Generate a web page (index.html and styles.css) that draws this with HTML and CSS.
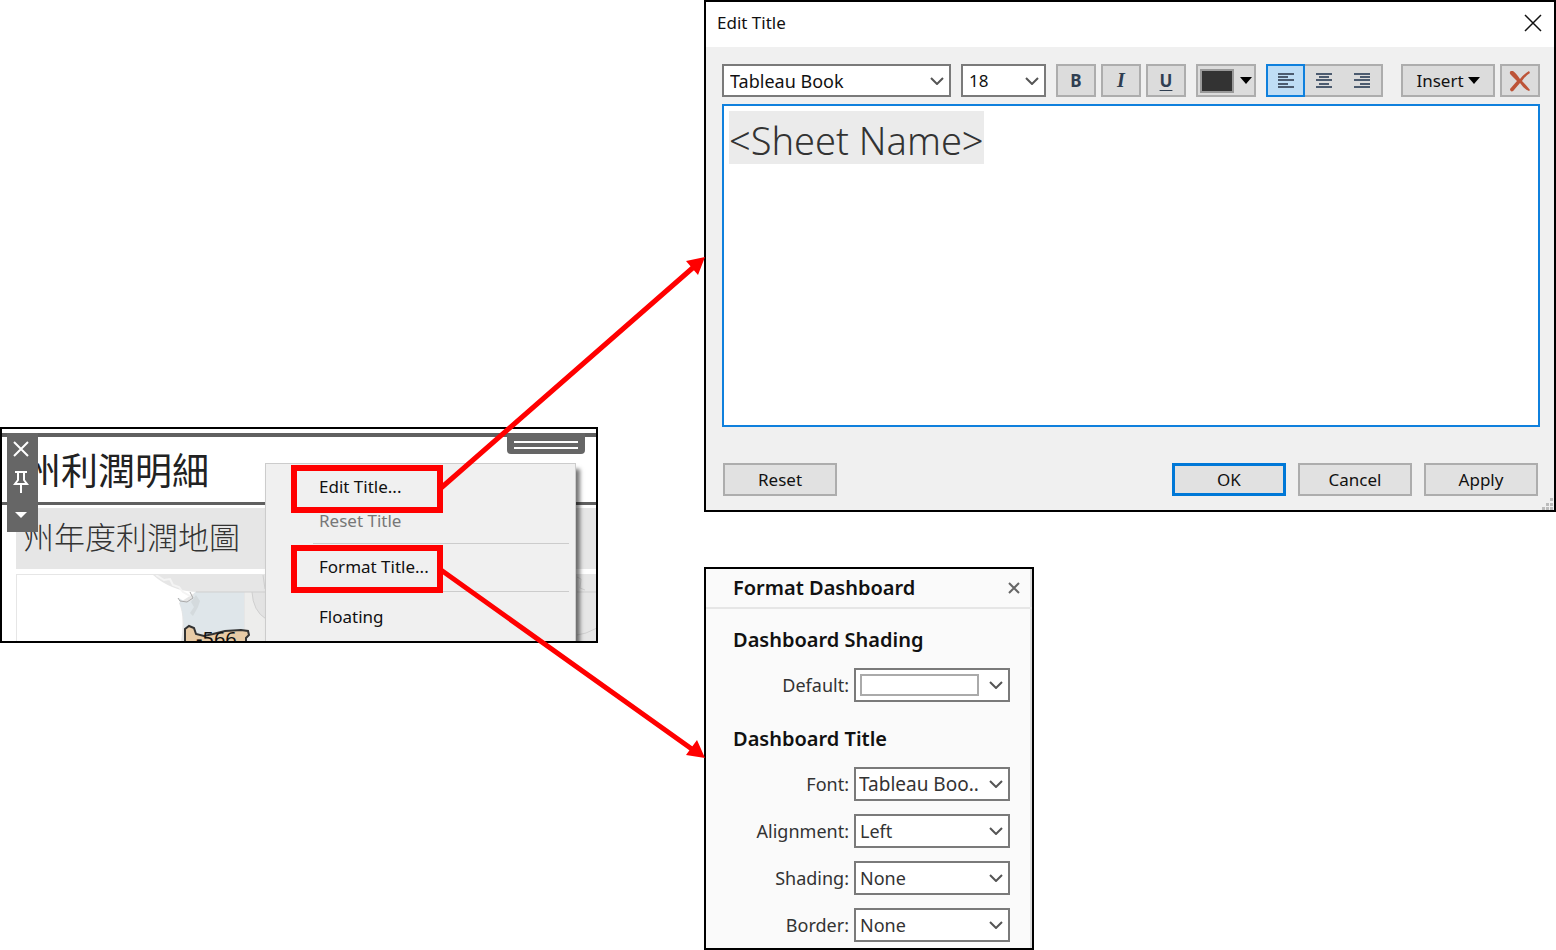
FILE: index.html
```html
<!DOCTYPE html>
<html lang="zh-Hant">
<head>
<meta charset="utf-8">
<title>Edit Title and Format Title</title>
<link rel="stylesheet" href="styles.css">
</head>
<body>
<main class="board">
  <section class="sheet" aria-label="Dashboard">
    <h1 class="sheet-title">州利潤明細</h1>
    <h2 class="sheet-subtitle">州年度利潤地圖</h2>
    <div class="map">
      <svg width="580" height="67" viewBox="16 574 580 67" aria-hidden="true">
        <path d="M152 574H596V641H264L180 641Q184 615 178 602L195 591Q170 590 152 574Z" fill="#e6e6e6"/>
        <path d="M155 574l8 5 6-1 3 6 6 2 4 5 7 4" fill="none" stroke="#f4f4f4" stroke-width="2"/>
        <path d="M178 597l6 4 6-1 4-9H243V641H183Q184 614 179 603Z" fill="#dfe6ea"/>
        <path d="M195 594l4 6-2 6-5 9-3-3 4-6-3-5Z" fill="#d4dadd"/>
        <path d="M244 591h21v50h-21Z" fill="#ededec"/>
        <path d="M251 591q1 19 14 27V591Z" fill="#e3e3e3"/>
        <path d="M195 591H265M251 591q1 19 14 27M262 574l2 14" fill="none" stroke="#cfcfcf"/>
        <path d="M177 597l2 3 7 1 6-4-3-6" fill="none" stroke="#aaa"/>
        <path d="M576 576l4 2-1 9 5 2M576 591h20M576 634l9-2 11-5" fill="none" stroke="#cfcfcf"/>
        <path d="M184 642V628l4-3 5 2 2 6 8 2 9-2 12-3 16-1 7 1 1 4-3 3v6Z" fill="#e8cba6" stroke="#333" stroke-width="2"/>
        <text x="195" y="645" class="map-value">-566</text>
      </svg>
    </div>
    <div class="tools">
      <button class="tool" aria-label="Remove"><svg width="18" height="18" viewBox="0 0 18 18"><path d="M2 2l14 14M16 2L2 16" stroke="#fff" stroke-width="2"/></svg></button>
      <button class="tool" aria-label="Pin"><svg width="16" height="24" viewBox="0 0 16 24"><path d="M2 2h12M5 2v8l-3 4h12l-3-4V2M8 14v9" fill="none" stroke="#fff" stroke-width="2"/></svg></button>
      <button class="tool" aria-label="More options"><svg width="12" height="8" viewBox="0 0 12 8"><path d="M0 1h12L6 7Z" fill="#fff"/></svg></button>
    </div>
    <div class="grip"></div>
    <div class="menu" role="menu">
      <button class="item marked" role="menuitem">Edit Title...</button>
      <button class="item off" role="menuitem" disabled>Reset Title</button>
      <hr class="rule">
      <button class="item marked" role="menuitem">Format Title...</button>
      <hr class="rule">
      <button class="item" role="menuitem">Floating</button>
    </div>
  </section>

  <div class="panels">
    <section class="dialog" aria-labelledby="dialog-title">
      <header class="dialog-head">
        <h2 class="dialog-title" id="dialog-title">Edit Title</h2>
        <button class="close" aria-label="Close"><svg width="18" height="18" viewBox="0 0 18 18"><path d="M1 1l16 16M17 1L1 17" stroke="#111" stroke-width="1.5"/></svg></button>
      </header>
      <div class="dialog-body">
        <div class="toolbar">
          <div class="pick family">
            <select aria-label="Font family"><option>Tableau Book</option></select>
            <svg width="14" height="8" viewBox="0 0 14 8"><path d="M1 1l6 6 6-6"/></svg>
          </div>
          <div class="pick size">
            <select aria-label="Font size"><option>18</option></select>
            <svg width="14" height="8" viewBox="0 0 14 8"><path d="M1 1l6 6 6-6"/></svg>
          </div>
          <div class="styles">
            <button class="key bold">B</button>
            <button class="key italic">I</button>
            <button class="key underline">U</button>
          </div>
          <button class="key color" aria-label="Text color"><span class="swatch"></span><svg width="12" height="7" viewBox="0 0 12 7"><path d="M0 0h12L6 7Z"/></svg></button>
          <div class="aligns">
            <button class="key active" aria-label="Align left"><svg width="16" height="15" viewBox="0 0 16 15"><path d="M0 1h16M0 4h10M0 7h16M0 11h10M0 14h16"/></svg></button>
            <button class="key" aria-label="Align center"><svg width="16" height="15" viewBox="0 0 16 15"><path d="M0 1h16M3 4h10M0 7h16M3 11h10M0 14h16"/></svg></button>
            <button class="key" aria-label="Align right"><svg width="16" height="15" viewBox="0 0 16 15"><path d="M0 1h16M6 4h10M0 7h16M6 11h10M0 14h16"/></svg></button>
          </div>
          <div class="extras">
            <button class="key insert">Insert <svg width="12" height="7" viewBox="0 0 12 7"><path d="M0 0h12L6 7Z"/></svg></button>
            <button class="key" aria-label="Clear"><svg width="22" height="22" viewBox="0 0 22 22"><path d="M2 1C0 2 1 4 2 5L8 11L1 19C1 22 4 22 5 20L11 13Q15 19 20 21L21 20Q17 15 13 11Q16 6 21 3L20 1Q15 4 11 9Q7 3 4 1Z" fill="#bd5438"/></svg></button>
          </div>
        </div>
        <textarea class="editor" aria-label="Title" spellcheck="false">&lt;Sheet Name&gt;</textarea>
        <footer class="actions">
          <button class="action">Reset</button>
          <button class="action main">OK</button>
          <button class="action">Cancel</button>
          <button class="action">Apply</button>
        </footer>
      </div>
      <svg class="resize" width="12" height="12" viewBox="0 0 12 12" aria-hidden="true"><path d="M8 0h3v3H8ZM4 5h3v3H4ZM8 5h3v3H8ZM0 9h3v3H0ZM4 9h3v3H4ZM8 9h3v3H8Z" fill="#bcbcbc"/></svg>
    </section>

    <section class="format" aria-labelledby="format-title">
      <header class="format-head">
        <h2 class="format-title" id="format-title">Format Dashboard</h2>
        <button class="close" aria-label="Close"><svg width="12" height="12" viewBox="0 0 12 12"><path d="M1 1l10 10M11 1L1 11" stroke="#666" stroke-width="2"/></svg></button>
      </header>
      <div class="format-body">
        <h3 class="format-title">Dashboard Shading</h3>
        <div class="row">
          <label for="default">Default:</label>
          <div class="pick">
            <select id="default"><option></option></select>
            <span class="blank"></span>
            <svg width="14" height="8" viewBox="0 0 14 8"><path d="M1 1l6 6 6-6"/></svg>
          </div>
        </div>
        <h3 class="format-title">Dashboard Title</h3>
        <div class="rows">
          <div class="row">
            <label for="font">Font:</label>
            <div class="pick"><select id="font" class="wide"><option>Tableau Boo..</option></select><svg width="14" height="8" viewBox="0 0 14 8"><path d="M1 1l6 6 6-6"/></svg></div>
          </div>
          <div class="row">
            <label for="alignment">Alignment:</label>
            <div class="pick"><select id="alignment"><option>Left</option></select><svg width="14" height="8" viewBox="0 0 14 8"><path d="M1 1l6 6 6-6"/></svg></div>
          </div>
          <div class="row">
            <label for="shading">Shading:</label>
            <div class="pick"><select id="shading"><option>None</option></select><svg width="14" height="8" viewBox="0 0 14 8"><path d="M1 1l6 6 6-6"/></svg></div>
          </div>
          <div class="row">
            <label for="border">Border:</label>
            <div class="pick"><select id="border"><option>None</option></select><svg width="14" height="8" viewBox="0 0 14 8"><path d="M1 1l6 6 6-6"/></svg></div>
          </div>
        </div>
      </div>
    </section>
  </div>

  <svg class="arrows" width="710" height="770" viewBox="0 0 710 770" aria-hidden="true">
    <path d="M441 488L696 265M441 570L696 752" stroke="#f00" stroke-width="5"/>
    <path d="M705 257L686 261L698 275ZM705 758L686 755L697 740Z" fill="#f00"/>
  </svg>
</main>
</body>
</html>
```
FILE: styles.css
```css
*, *::before { box-sizing: border-box; }

body {
  margin: 0;
  background: #fff;
  color: #111;
  font: 17px/24px "Noto Sans", "Noto Sans CJK TC", sans-serif;
}

h1, h2, h3 { margin: 0; }

button, select, textarea {
  margin: 0;
  padding: 0;
  border: 0;
  border-radius: 0;
  background: none;
  color: inherit;
  font: inherit;
}

svg { display: block; }

.board {
  position: relative;
  display: grid;
  grid-template-columns: 598px minmax(0, 1fr);
  column-gap: 106px;
  align-items: start;
}

/* Dashboard excerpt */
.sheet {
  position: relative;
  margin-top: 427px;
  padding: 4px 0 0 14px;
  border: 2px solid #000;
  background: #fff;
  overflow: hidden;
}

.sheet-title {
  height: 72px;
  margin-left: -14px;
  padding-left: 22px;
  border: solid #606060;
  border-width: 4px 0 3px;
  font: 400 37px/64px "Noto Sans CJK TC", sans-serif;
  color: #222;
}

.sheet-subtitle {
  height: 61px;
  margin: 3px 0 5px;
  padding-left: 7px;
  background: #e6e6e6;
  font: 300 31px/56px "Noto Sans CJK TC", sans-serif;
  color: #333;
}

.map {
  border: solid #e6e6e6;
  border-width: 1px 0 0 1px;
  height: 67px;
  overflow: hidden;
}

.map-value { font: 20px "Noto Sans", sans-serif; fill: #111; }

.tools {
  position: absolute;
  top: 4px;
  left: 5px;
  display: flex;
  flex-direction: column;
  align-items: center;
  gap: 12px;
  width: 31px;
  height: 99px;
  padding: 7px 3px 0 0;
  background: #666;
}

.tool:last-child { padding-top: 5px; }

.grip {
  position: absolute;
  top: 4px;
  right: 11px;
  width: 78px;
  height: 21px;
  padding: 8px 7px 0;
  border-radius: 0 0 4px 4px;
  background: #666;
}

.grip::before {
  content: "";
  display: block;
  height: 8px;
  border: solid #fff;
  border-width: 2px 0;
}

.menu {
  position: absolute;
  top: 34px;
  left: 263px;
  display: flex;
  flex-direction: column;
  width: 311px;
  height: 200px;
  padding: 1px 5px 0 25px;
  border: 1px solid #ccc;
  background: #f0f0f0;
  box-shadow: 4px 6px 4px #0008;
}

.item {
  flex: none;
  height: 48px;
  padding-left: 28px;
  text-align: left;
  color: #111;
}

.item.marked {
  z-index: 1;
  width: 152px;
  padding-left: 22px;
  padding-bottom: 4px;
  border: 6px solid #f00;
  white-space: nowrap;
}

.item.off { height: 16px; line-height: 16px; color: #777; }

.rule {
  width: 256px;
  margin: 14px 0 1px 22px;
  border: 0;
  border-top: 1px solid #ccc;
}

.item.marked + .rule { margin-top: -2px; }

/* Right-hand windows */
.panels { display: grid; gap: 55px; }

.dialog {
  position: relative;
  border: 2px solid #000;
  background: #f0f0f0;
}

.dialog-head {
  display: flex;
  align-items: center;
  justify-content: space-between;
  height: 45px;
  padding: 0 12px 4px 11px;
  background: #fff;
}

.dialog-title { font-size: 17px; font-weight: 400; }

.dialog-body { padding: 17px 14px 14px 16px; }

.toolbar { display: flex; gap: 10px; height: 33px; }

.pick {
  display: grid;
  grid-template-columns: minmax(0, 1fr);
  align-items: center;
  border: 2px solid #7a7a7a;
  background: #fff;
}

.pick > * { grid-area: 1 / 1; }

.pick select {
  appearance: none;
  width: 100%;
  height: 100%;
  padding-left: 6px;
}

.pick svg {
  justify-self: end;
  margin-right: 5px;
  fill: none;
  stroke: #555;
  stroke-width: 2;
  pointer-events: none;
}

.family { width: 229px; font-size: 18px; }
.size { width: 85px; }

.styles { display: flex; gap: 5px; }

.key {
  display: flex;
  align-items: center;
  justify-content: center;
  width: 40px;
  height: 33px;
  border: 2px solid #adadad;
  background: #dcdcdc;
  color: #2f3e51;
}

.bold { font-weight: 700; }
.italic { font: italic 700 20px "Liberation Serif", serif; }
.underline { font-weight: 700; text-decoration: underline; text-underline-offset: 3px; }

.color { width: 60px; gap: 6px; fill: #000; }

.swatch {
  width: 34px;
  height: 24px;
  border: 2px solid #999;
  background: #333;
}

.aligns { display: flex; border: 2px solid #adadad; background: #dcdcdc; }

.aligns .key {
  width: 38px;
  height: 29px;
  border: 0;
  background: none;
  stroke: #4c5b6f;
  stroke-width: 2;
}

.aligns .active {
  width: 39px;
  height: 33px;
  margin: -2px 0 -2px -2px;
  border: 2px solid #0f80dd;
  background: #bfddf5;
}

.extras { display: flex; gap: 5px; margin-left: auto; }

.insert { width: 94px; gap: 4px; color: #111; fill: #000; }

.editor {
  display: block;
  width: 100%;
  height: 323px;
  margin-top: 7px;
  padding: 5px;
  border: 2px solid #0f80dd;
  outline: 0;
  resize: none;
  background: linear-gradient(#ebebeb, #ebebeb) 5px 5px / 255px 53px no-repeat #fff;
  color: #333;
  font: 300 38px/58px "Noto Sans", sans-serif;
}

.actions {
  display: flex;
  gap: 12px;
  margin-top: 36px;
  padding: 0 2px 0 1px;
}

.action {
  width: 114px;
  height: 33px;
  border: 2px solid #adadad;
  background: #e1e1e1;
}

.action.main { margin-left: auto; border: 3px solid #0078d7; }

.resize { position: absolute; right: 0; bottom: 0; }

.format {
  width: 330px;
  border: 2px solid #000;
  background: #fafafa;
  box-shadow: inset -2px 0 #ddd;
  font: 18px/24px "Noto Sans", sans-serif;
  color: #333;
}

.format-head {
  display: flex;
  align-items: center;
  justify-content: space-between;
  height: 40px;
  padding: 0 12px 0 27px;
  border-bottom: 2px solid #e6e6e6;
}

.format-title { font-size: 20px; font-weight: 600; line-height: 24px; color: #111; }

.format-body { display: grid; gap: 16px; padding: 19px 22px 6px 27px; }

.format-body .row + .format-title { margin-top: 9px; }

.rows { display: grid; gap: 13px; }

.row {
  display: grid;
  grid-template-columns: minmax(0, 1fr) 156px;
  align-items: center;
  gap: 5px;
  text-align: right;
}

.row .pick { height: 34px; }
.row .pick select { padding-left: 4px; }
.row .pick .wide { padding-left: 3px; font-size: 19px; }

.blank {
  width: 119px;
  height: 22px;
  margin-left: 4px;
  border: 2px solid #aaa;
  pointer-events: none;
}

.arrows { position: absolute; top: 0; left: 0; pointer-events: none; }
```
